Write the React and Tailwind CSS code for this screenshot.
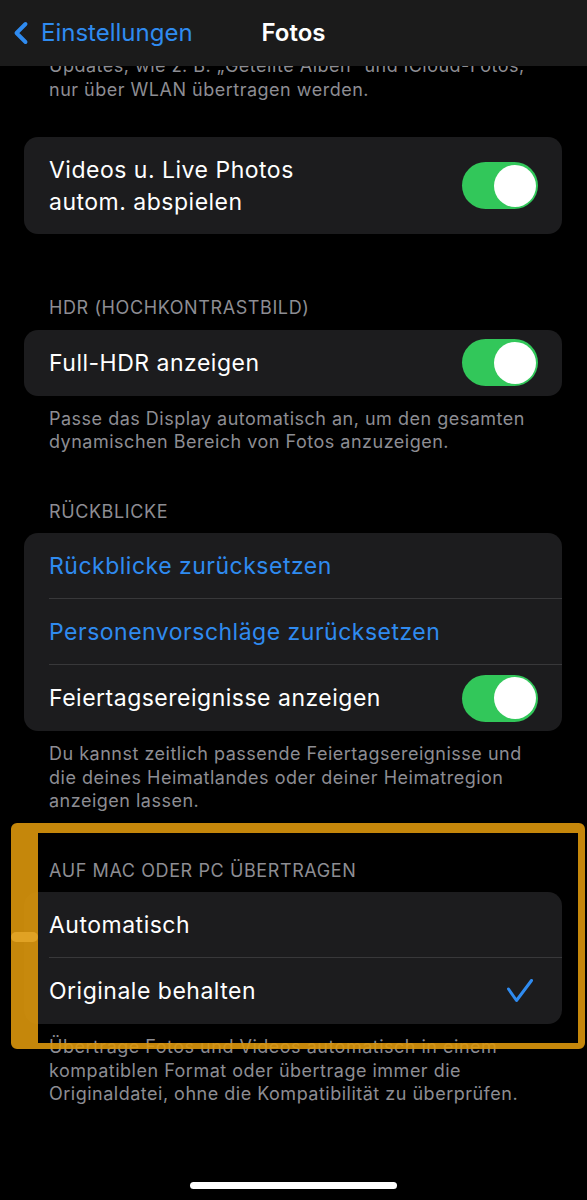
import { ChevronLeft } from 'lucide-react';

const font = { fontFamily: 'Inter, "Noto Sans", "Liberation Sans", sans-serif' };

function Toggle() {
  return (
    <div className="flex h-[47px] w-[76px] shrink-0 items-center justify-end rounded-full bg-[#32c75a] px-[2px]">
      <div className="h-[42px] w-[42px] rounded-full bg-white" />
    </div>
  );
}

function Checkmark() {
  return (
    <svg width="26" height="24" viewBox="0 0 26 24" className="mr-[5px] shrink-0">
      <path
        d="M1.5 10 L9.5 21.5 L24.5 1.5"
        fill="none"
        stroke="#2f8bf0"
        strokeWidth="3"
        strokeLinecap="round"
        strokeLinejoin="round"
      />
    </svg>
  );
}

function Row({ children, right, blue, last, tall }) {
  return (
    <div className={`flex items-center pl-[25px] ${tall ? 'h-[97px]' : 'h-[66px]'}`}>
      <div
        className={`flex h-full flex-1 items-center pr-[24px] ${last ? '' : 'border-b border-[#38383a]'}`}
      >
        <div
          className={`flex-1 text-[23px] leading-[32px] tracking-[0.5px] ${blue ? 'text-[#2f8bf0]' : 'text-white'}`}
        >
          {children}
        </div>
        {right}
      </div>
    </div>
  );
}

function Card({ children }) {
  return <div className="mx-[24px] w-[538px] overflow-hidden rounded-[14px] bg-[#1c1c1e]">{children}</div>;
}

function Header({ children }) {
  return (
    <div className="px-[49px] pb-[10px] text-[18px] uppercase leading-[23.5px] tracking-[0.6px] text-[#8d8d93]">
      {children}
    </div>
  );
}

function Footer({ children }) {
  return (
    <div className="px-[49px] pt-[11px] text-[18px] leading-[23.5px] tracking-[0.5px] text-[#8d8d93]">{children}</div>
  );
}

export default function App() {
  return (
    <div className="relative h-[1200px] w-[587px] overflow-hidden bg-black" style={font}>
      <div className="absolute inset-x-0 top-0 z-10 flex h-[66px] items-center bg-[#1b1b1b]">
        <div className="flex items-center pl-[3px] text-[24px] text-[#2f8bf0]">
          <ChevronLeft size={36} strokeWidth={2.6} />
          <span className="ml-[2px]">Einstellungen</span>
        </div>
        <div className="pointer-events-none absolute left-0 right-0 text-center text-[24px] font-semibold text-white">
          Fotos
        </div>
      </div>

      <div className="pt-[54px]">
        <div className="px-[49px] text-[18px] leading-[23.5px] tracking-[0.5px] text-[#8d8d93]">
          Updates, wie z. B. „Geteilte Alben“ und iCloud-Fotos, nur über WLAN übertragen werden.
        </div>

        <div className="mt-[36px]">
          <Card>
            <Row tall last right={<Toggle />}>
              Videos u. Live Photos
              <br />
              autom. abspielen
            </Row>
          </Card>
        </div>

        <div className="mt-[62px]">
          <Header>HDR (Hochkontrastbild)</Header>
          <Card>
            <Row last right={<Toggle />}>Full-HDR anzeigen</Row>
          </Card>
          <Footer>Passe das Display automatisch an, um den gesamten dynamischen Bereich von Fotos anzuzeigen.</Footer>
        </div>

        <div className="mt-[46px]">
          <Header>Rückblicke</Header>
          <Card>
            <Row blue>Rückblicke zurücksetzen</Row>
            <Row blue>Personenvorschläge zurücksetzen</Row>
            <Row last right={<Toggle />}>Feiertagsereignisse anzeigen</Row>
          </Card>
          <Footer>
            Du kannst zeitlich passende Feiertagsereignisse und die deines Heimatlandes oder deiner Heimatregion
            anzeigen lassen.
          </Footer>
        </div>

        <div className="mt-[46px]">
          <Header>Auf Mac oder PC übertragen</Header>
          <Card>
            <Row>Automatisch</Row>
            <Row last right={<Checkmark />}>
              Originale behalten
            </Row>
          </Card>
          <Footer>
            Übertrage Fotos und Videos automatisch in einem kompatiblen Format oder übertrage immer die
            Originaldatei, ohne die Kompatibilität zu überprüfen.
          </Footer>
        </div>
      </div>

      {/* highlight frame drawn over the last section */}
      <div className="pointer-events-none absolute left-[11px] top-[823px] h-[226px] w-[574px] rounded-[6px] border-b-[6px] border-l-[27px] border-r-[7px] border-t-[10px] border-[#d8940ce8]" />
      <div className="pointer-events-none absolute left-[11px] top-[932px] h-[10px] w-[27px] rounded-full bg-[#e0a224]" />

      <div className="absolute bottom-[11px] left-[190px] h-[7px] w-[207px] rounded-full bg-white" />
    </div>
  );
}
